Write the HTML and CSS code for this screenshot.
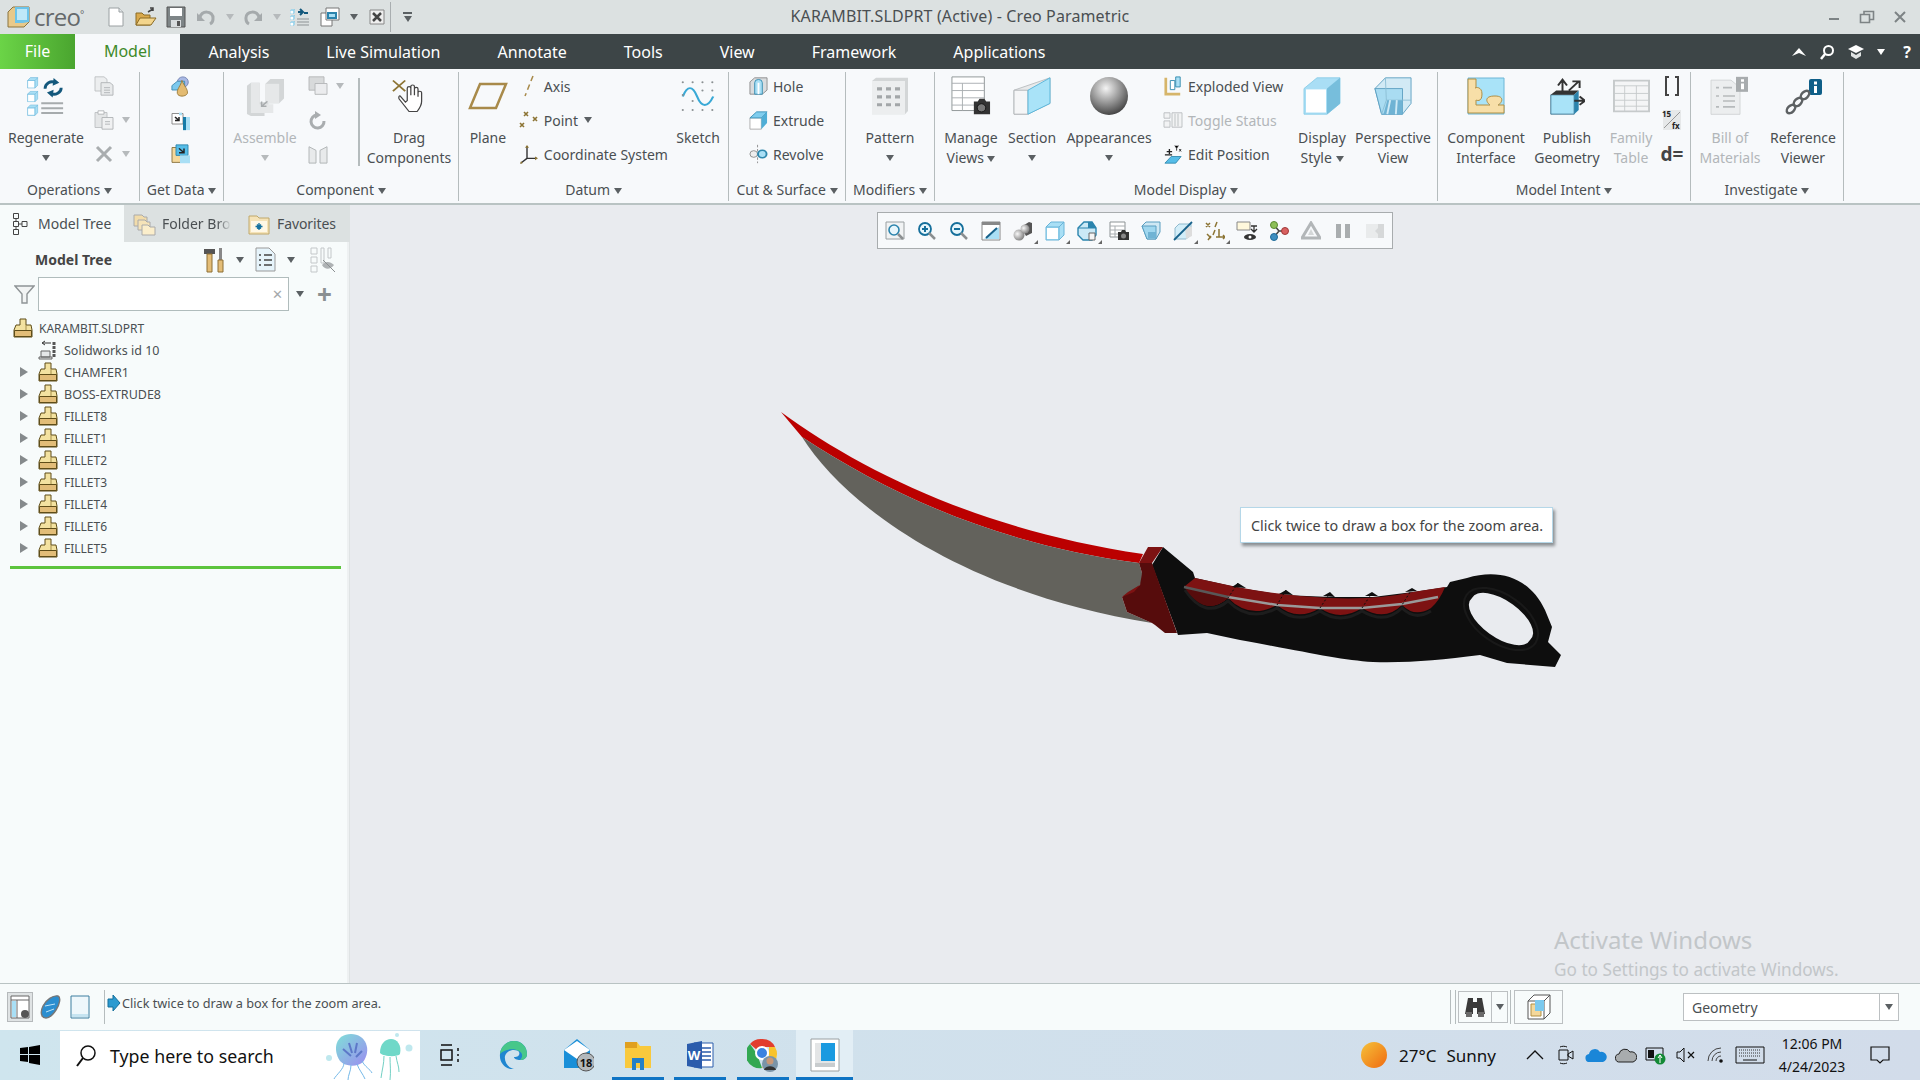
FILE: index.html
```html
<!DOCTYPE html>
<html lang="en">
<head>
    <meta charset="UTF-8">
    <title>KARAMBIT.SLDPRT (Active) - Creo Parametric</title>
    <link rel="stylesheet" href="styles.css">
</head>
<body>
<svg class="defs" width="0" height="0">
    <symbol id="part" viewBox="0 0 20 20"><path d="M7 1h6v6h5l1 5v7H1v-7l2-5h4z" fill="#f3e2a0" stroke="#5e4d18"/><path d="M1.500 12.500h17V18.500h-17z" fill="#e2bd78" stroke="#5e4d18"/><path d="M13 7v5" stroke="#a58f4a"/></symbol>
    <symbol id="cube" viewBox="0 0 20 20"><path d="M1 6l5-5h13v13l-5 5H1z" fill="#a9dff5" stroke="#69b4d8"/><path d="M2 7h11v11H2z" fill="#fff"/><path d="M1 6h13v13M14 6l5-5" fill="none" stroke="#69b4d8"/></symbol>
    <symbol id="arrow" viewBox="0 0 10 12"><path d="M1 1l8 5-8 5z" fill="#858a8c"/></symbol>
</svg>

<!-- title bar -->
<header class="titlebar">
    <div class="qat">
        <svg class="logo" width="24" height="24" viewBox="0 0 24 24"><path d="M1 7l5-5h16v15l-5 5H1z" fill="#e8c98a" stroke="#8a7440"/><path d="M8 2h14v15l-6 1H8z" fill="#6cc4ea"/><path d="M10 4h10v11H10z" fill="#bfe8f8"/></svg>
        <span class="creo">creo<span class="reg">°</span></span>
        <span class="q"><svg width="18" height="20" viewBox="0 0 18 20"><path d="M2 1h10l4 4v14H2z" fill="#fff" stroke="#9aa0a2"/><path d="M12 1v4h4" fill="#e4e8ea" stroke="#9aa0a2"/></svg></span>
        <span class="q"><svg width="22" height="20" viewBox="0 0 22 20"><path d="M1 18V6h6l2 2h6v10z" fill="#d9a94c" stroke="#8a6a24"/><path d="M1 18l4-7h16l-5 7z" fill="#f3d58d" stroke="#8a6a24"/><path d="M13 5l5-3m-3-1h3v3" fill="none" stroke="#444" stroke-width="1.5"/></svg></span>
        <span class="q"><svg width="20" height="22" viewBox="0 0 20 22"><path d="M1 1h18v20H1z" fill="#7e8587" stroke="#555"/><path d="M4 2h12v8H4z" fill="#fff"/><path d="M5 14h10v7H5z" fill="#d8dcde"/><path d="M11 15h3v5h-3z" fill="#555"/></svg></span>
        <span class="q"><svg width="20" height="18" viewBox="0 0 20 18"><path d="M4 10c0-8 14-8 13 1 0 2-1 4-3 5" fill="none" stroke="#a5aaac" stroke-width="3"/><path d="M1 5v8h8z" fill="#a5aaac"/></svg></span>
        <i class="caret qc dim"></i>
        <span class="q"><svg width="20" height="18" viewBox="0 0 20 18"><path d="M16 10c0-8-14-8-13 1 0 2 1 4 3 5" fill="none" stroke="#a5aaac" stroke-width="3"/><path d="M19 5v8h-8z" fill="#a5aaac"/></svg></span>
        <i class="caret qc dim"></i>
        <span class="q"><svg width="20" height="20" viewBox="0 0 20 20"><use href="#cube" width="5" height="5" x="0" y="2"/><use href="#cube" width="5" height="5" x="0" y="8"/><use href="#cube" width="5" height="5" x="0" y="14"/><path d="M7 12h12M7 15h12M7 18h12" stroke="#8d9395"/><path d="M8 5h4m-2-3l3 3-3 3M18 6h-4m2-3" fill="none" stroke="#13587c" stroke-width="2"/></svg></span>
        <span class="q"><svg width="20" height="20" viewBox="0 0 20 20"><path d="M1 6h11v13H1z" fill="#fff" stroke="#777"/><path d="M6 1h13v12H6z" fill="#fff" stroke="#777"/><path d="M7 5h10v7H7z" fill="#2b84ad"/><path d="M9 7h6v3H9z" fill="#a9dff5"/></svg></span>
        <i class="caret qc"></i>
        <span class="q"><svg width="16" height="16" viewBox="0 0 16 16"><path d="M1 1h14v14H1z" fill="#eee" stroke="#888"/><path d="M4 4l8 8m0-8l-8 8" stroke="#444" stroke-width="2.5"/></svg></span>
        <i class="qat-sep"></i>
        <span class="custom"><i class="custom-bar"></i><i class="caret"></i></span>
    </div>
    <div class="title">KARAMBIT.SLDPRT (Active) - Creo Parametric</div>
    <div class="winctl">
        <svg width="14" height="14" viewBox="0 0 14 14"><path d="M2 9h10" stroke="#7d8385" stroke-width="2"/></svg>
        <svg width="16" height="14" viewBox="0 0 16 14"><path d="M1.500 4.500h9v8h-9zM5 4.500V1.500h9.500v8H10.500" fill="none" stroke="#7d8385" stroke-width="1.600"/></svg>
        <svg width="14" height="14" viewBox="0 0 14 14"><path d="M2 2l10 10M12 2L2 12" stroke="#7d8385" stroke-width="2"/></svg>
    </div>
</header>

<!-- menu tabs -->
<nav class="tabbar">
    <a class="tab-file">File</a>
    <a class="tab-model">Model</a>
    <div class="tabs">
        <a>Analysis</a>
        <a>Live Simulation</a>
        <a>Annotate</a>
        <a>Tools</a>
        <a>View</a>
        <a>Framework</a>
        <a>Applications</a>
    </div>
    <div class="tabbar-right">
        <svg width="16" height="10" viewBox="0 0 16 10"><path d="M1 9l7-8 7 8-7-3z" fill="#fff"/></svg>
        <svg width="16" height="16" viewBox="0 0 16 16"><circle cx="9.500" cy="6.500" r="4.500" fill="none" stroke="#fff" stroke-width="2"/><path d="M6 10l-4 5" stroke="#fff" stroke-width="2.500"/></svg>
        <svg width="18" height="16" viewBox="0 0 18 16"><path d="M1 5l8-4 8 4-8 4z" fill="#fff"/><path d="M4 8v4l5 3 5-3V8l-5 3z" fill="#dfe3e3"/></svg>
        <i class="caret white"></i>
        <span class="help">?</span>
    </div>
</nav>

<!-- ribbon -->
<section class="ribbon">
    <div class="group w140">
        <div class="body">
            <div class="big w92">
                <span class="ico"><svg width="38" height="39" viewBox="0 0 40 40" preserveAspectRatio="none"><use href="#cube" width="12" height="12" x="0" y="0"/><use href="#cube" width="12" height="12" x="0" y="14"/><use href="#cube" width="12" height="12" x="0" y="28"/><path d="M15 27h23M15 32h23M15 37h23" stroke="#a6abad" stroke-width="2"/><path d="M19 12c0-5 6-9 11-6m6 5c0 5-6 8-11 6" fill="none" stroke="#13587c" stroke-width="3"/><path d="M28 1l6 5-7 3zM27 21l-6-5 7-3z" fill="#13587c"/></svg></span>
                <span>Regenerate</span><i class="caret"></i>
            </div>
            <div class="col">
                <div class="row"><span class="cell"><svg width="20" height="20" viewBox="0 0 20 24" preserveAspectRatio="none"><path d="M1 1h9l3 3v14H1z" fill="#eceeef" stroke="#bdc1c3"/><path d="M7 8h9l3 3v12H7z" fill="#e8eaeb" stroke="#b0b4b6"/><path d="M10 14h6M10 17h6M10 20h6" stroke="#b0b4b6"/></svg></span></div>
                <div class="row"><span class="cell"><svg width="20" height="20" viewBox="0 0 20 24" preserveAspectRatio="none"><path d="M1 3h12v18H1z" fill="#e4e6e7" stroke="#bdc1c3"/><path d="M4 1h6v4H4z" fill="#fff" stroke="#b0b4b6"/><path d="M8 9h11v14H8z" fill="#f0f1f2" stroke="#b0b4b6"/><path d="M11 14h5M11 17h5" stroke="#b0b4b6"/></svg></span><i class="caret dim"></i></div>
                <div class="row"><span class="cell"><svg width="18" height="18" viewBox="0 0 18 18"><path d="M2 2l14 14M16 2L2 16" stroke="#a9adaf" stroke-width="3"/></svg></span><i class="caret dim"></i></div>
            </div>
        </div>
        <div class="label">Operations <i class="caret"></i></div>
    </div>

    <div class="group w84">
        <div class="body">
            <div class="col pad29">
                <div class="row"><span class="cell"><svg width="20" height="21" viewBox="0 0 22 24" preserveAspectRatio="none"><circle cx="13" cy="7" r="6" fill="#a8b8e4" stroke="#6d7fb0"/><path d="M1 11l6-5h8v10H1z" fill="#7cc9ee" stroke="#3e8ab0"/><path d="M12 5c2 6 7 10 6 15-2 4-10 4-11 0-1-5 4-9 5-15z" fill="#e3bb72" stroke="#9a7a38"/></svg></span></div>
                <div class="row"><span class="cell"><svg width="20" height="21" viewBox="0 0 20 24" preserveAspectRatio="none"><path d="M1 4h11v12H1z" fill="#fff" stroke="#888"/><path d="M8 3h3v3H8z" fill="#a9dff5"/><path d="M12 8h7v15h-7z" fill="#a9dff5"/><path d="M12 8h3v15h-3z" fill="#167ba8"/><path d="M4 8l4 4m0-4v4H4" fill="none" stroke="#222" stroke-width="1.500"/></svg></span></div>
                <div class="row"><span class="cell"><svg width="20" height="21" viewBox="0 0 20 24" preserveAspectRatio="none"><path d="M1 4h11v17H1z" fill="#f4d89b" stroke="#8a7440"/><path d="M5 1h12v12H5z" fill="#55bde8" stroke="#2f88ad"/><path d="M9 13h10v9H9z" fill="#a9dff5"/><path d="M8 5l5 5m0-5v5H8" fill="none" stroke="#222" stroke-width="1.500"/></svg></span></div>
            </div>
        </div>
        <div class="label">Get Data <i class="caret"></i></div>
    </div>

    <div class="group w235">
        <div class="body">
            <div class="big w82 off">
                <span class="ico"><svg width="39" height="39" viewBox="0 0 40 40"><path d="M1 9l4-3h9v20l-3 0h12v5l-4 4v5H5l-4-2z" fill="#d3d6d7"/><path d="M5 6h9v22h14v9H5z" fill="#e6e8e9"/><path d="M20 7l5-5h14v20l-5 5H20z" fill="#d3d6d7"/><path d="M20 7h14v20H20z" fill="#e6e8e9"/><path d="M22 25l-6 5m0-5v5h5" fill="none" stroke="#a8acae" stroke-width="1.500"/></svg></span>
                <span>Assemble</span><i class="caret dim"></i>
            </div>
            <div class="col w52">
                <div class="row"><span class="cell"><svg width="20" height="20" viewBox="0 0 20 24" preserveAspectRatio="none"><path d="M1 1h15v16H1z" fill="#d8dadb" stroke="#b3b6b8"/><path d="M7 9h12v13H7z" fill="#ebecee" stroke="#b3b6b8"/></svg></span><i class="caret dim"></i></div>
                <div class="row"><span class="cell"><svg width="18" height="20" viewBox="0 0 18 20"><path d="M15 11a6.500 6.500 0 1 1-7-6" fill="none" stroke="#a9adaf" stroke-width="3"/><path d="M6 1l6 4-6 4z" fill="#a9adaf"/></svg></span></div>
                <div class="row"><span class="cell"><svg width="20" height="20" viewBox="0 0 20 22" preserveAspectRatio="none"><path d="M1 3l7 4v14H1zM19 3l-7 4v14h7z" fill="#e8eaeb" stroke="#b0b4b6"/></svg></span></div>
            </div>
            <i class="vsep"></i>
            <div class="big w98">
                <span class="ico"><svg width="34" height="36" viewBox="0 0 36 44" preserveAspectRatio="none"><path d="M1 3l13 13M14 3L1 16" stroke="#8c7434" stroke-width="2"/><path d="M9 22l6 8 2-2V12a2 2 0 0 1 4 0v9V10a2 2 0 0 1 4 0v11-8a2 2 0 0 1 4 0v10-5a2 2 0 0 1 4 0v11c0 6-3 10-5 13H19L8 26c-1-2 0-5 1-4z" fill="#fff" stroke="#444" stroke-width="1.400" transform="translate(0 1) scale(.95)"/></svg></span>
                <span>Drag</span><span>Components</span>
            </div>
        </div>
        <div class="label">Component <i class="caret"></i></div>
    </div>

    <div class="group w270">
        <div class="body">
            <div class="big w58">
                <span class="ico"><svg width="40" height="28" viewBox="0 0 40 28"><path d="M12 2h26l-10 24H2z" fill="none" stroke="#a88a4a" stroke-width="2.500"/></svg></span>
                <span>Plane</span>
            </div>
            <div class="col w152">
                <div class="row"><span class="cell"><svg width="14" height="22" viewBox="0 0 14 24" preserveAspectRatio="none"><path d="M11 1l-8 22" stroke="#a88a4a" stroke-width="1.500" stroke-dasharray="6 4"/></svg></span><span class="rtxt">Axis</span></div>
                <div class="row"><span class="cell"><svg width="20" height="20" viewBox="0 0 20 20"><path d="M5 2l4 4m0-4L5 6M14 7l4 4m0-4l-4 4M1 13l4 4m0-4l-4 4" stroke="#8c7434" stroke-width="1.600"/></svg></span><span class="rtxt">Point</span><i class="caret ml8"></i></div>
                <div class="row"><span class="cell"><svg width="20" height="21" viewBox="0 0 20 22" preserveAspectRatio="none"><path d="M8 2v13l-6 5M8 15h10" fill="none" stroke="#333" stroke-width="1.400"/><path d="M8 1l2 3H6zM19 15l-3 2v-4zM1 21l1-3 2 2z" fill="#8c7434"/></svg></span><span class="rtxt">Coordinate System</span></div>
            </div>
            <div class="big w60">
                <span class="ico"><svg width="34" height="33" viewBox="0 0 38 44" preserveAspectRatio="none"><path d="M2 22c5-15 11-15 16 0s12 15 18 0" fill="none" stroke="#39a9d6" stroke-width="2.500"/><g fill="#8a9092"><circle cx="2" cy="3" r="1.200"/><circle cx="13" cy="3" r="1.200"/><circle cx="24" cy="3" r="1.200"/><circle cx="35" cy="3" r="1.200"/><circle cx="2" cy="20" r="1.200"/><circle cx="35" cy="14" r="1.200"/><circle cx="24" cy="14" r="1.200"/><circle cx="2" cy="40" r="1.200"/><circle cx="13" cy="40" r="1.200"/><circle cx="24" cy="40" r="1.200"/><circle cx="35" cy="40" r="1.200"/><circle cx="13" cy="28" r="1.200"/></g></svg></span>
                <span>Sketch</span>
            </div>
        </div>
        <div class="label">Datum <i class="caret"></i></div>
    </div>

    <div class="group w117">
        <div class="body">
            <div class="col pad19">
                <div class="row"><span class="cell"><svg width="19" height="18" viewBox="0 0 20 22" preserveAspectRatio="none"><path d="M1 6l5-5h13v15l-5 5H1z" fill="#d9dcde" stroke="#888"/><path d="M6 21V7a4 4 0 0 1 8 0v14z" fill="#a9dff5" stroke="#2f88ad"/><path d="M9 21V7h2v14z" fill="#fff"/></svg></span><span class="rtxt">Hole</span></div>
                <div class="row"><span class="cell"><svg width="19" height="19" viewBox="0 0 20 22" preserveAspectRatio="none"><path d="M1 8h12v13H1z" fill="#fff" stroke="#aaa"/><path d="M1 8l7-7h11L13 8z" fill="#7fcdee" stroke="#3d92b8"/><path d="M13 8l6-7v13l-6 7z" fill="#4faed6"/></svg></span><span class="rtxt">Extrude</span></div>
                <div class="row"><span class="cell"><svg width="19" height="20" viewBox="0 0 20 24" preserveAspectRatio="none"><path d="M9 1v22" stroke="#888" stroke-dasharray="3 2"/><circle cx="5" cy="12" r="4" fill="#eee" stroke="#888"/><circle cx="14" cy="12" r="4.500" fill="#a9dff5" stroke="#2f88ad" stroke-width="2"/></svg></span><span class="rtxt">Revolve</span></div>
            </div>
        </div>
        <div class="label">Cut &amp; Surface <i class="caret"></i></div>
    </div>

    <div class="group w89">
        <div class="body">
            <div class="big w88">
                <span class="ico"><svg width="38" height="38" viewBox="0 0 38 48" preserveAspectRatio="none"><path d="M1 5l4-4h32v42l-3 4H1z" fill="#d3d6d7"/><path d="M1 5h33v42H1z" fill="#eceeef"/><g fill="#a3a7a9"><path d="M6 13h5v4H6zM15 13h5v4h-5zM24 13h5v4h-5zM6 23h5v4H6zM15 23h5v4h-5zM24 23h5v4h-5zM6 33h5v4H6zM15 33h5v4h-5zM24 33h5v4h-5z"/></g></svg></span>
                <span>Pattern</span><i class="caret"></i>
            </div>
        </div>
        <div class="label">Modifiers <i class="caret"></i></div>
    </div>

    <div class="group w503">
        <div class="body">
            <div class="big w72">
                <span class="ico"><svg width="40" height="40" viewBox="0 0 42 44" preserveAspectRatio="none"><path d="M1 1h34v37H1z" fill="#fff" stroke="#8d9395"/><path d="M1 8h34M1 16h34M1 24h34M1 32h26M12 8v30" stroke="#a8adb0"/><path d="M24 28h4l2-3h5l2 3h4v14H24z" fill="#333"/><circle cx="32" cy="35" r="4.500" fill="#777" stroke="#111"/></svg></span>
                <span>Manage</span><span>Views <i class="caret"></i></span>
            </div>
            <div class="big w50">
                <span class="ico"><svg width="38" height="38" viewBox="0 0 38 46" preserveAspectRatio="none"><path d="M1 16L37 1v31L15 45H1z" fill="#e8eaeb" stroke="#b9bdbf"/><path d="M1 16h14v29H1z" fill="#f5f6f7" stroke="#b0b4b6"/><path d="M15 16L37 1v31L15 45z" fill="#a9e3f8" stroke="#55b3d8"/></svg></span>
                <span>Section</span><i class="caret"></i>
            </div>
            <div class="big w104">
                <span class="ico"><svg width="38" height="38" viewBox="0 0 38 38"><defs><radialGradient id="ball" cx=".42" cy=".3" r=".75"><stop offset="0" stop-color="#f4f4f4"/><stop offset=".55" stop-color="#8f8f8f"/><stop offset="1" stop-color="#3a3a3a"/></radialGradient></defs><circle cx="19" cy="19" r="19" fill="url(#ball)"/></svg></span>
                <span>Appearances</span><i class="caret"></i>
            </div>
            <div class="col w131">
                <div class="row"><span class="cell"><svg width="18" height="20" viewBox="0 0 20 22" preserveAspectRatio="none"><path d="M2 2v18h16" fill="none" stroke="#d6b56a" stroke-width="3"/><path d="M7 5h5v10H7z" fill="#fff" stroke="#2f88ad"/><path d="M13 1h5v11h-5z" fill="#a9dff5" stroke="#2f88ad"/></svg></span><span class="rtxt">Exploded View</span></div>
                <div class="row off"><span class="cell"><svg width="20" height="18" viewBox="0 0 20 20" preserveAspectRatio="none"><path d="M1 2h6v6H1zM1 11h6v7H1zM9 2h10v16H9z" fill="#f2f3f4" stroke="#bcc0c2"/><path d="M12 3v14M15 3v14" stroke="#bcc0c2"/></svg></span><span class="rtxt">Toggle Status</span></div>
                <div class="row"><span class="cell"><svg width="18" height="20" viewBox="0 0 20 24" preserveAspectRatio="none"><path d="M1 23l7-8h11l-6 8z" fill="#55bde8" stroke="#2f88ad"/><path d="M3 9h6m-3-3v6M1 13h8" stroke="#222" stroke-width="1.500"/><path d="M12 2l2 3 2-3m-2 3v3M17 9l2-3m-2 0l2 3" stroke="#222"/></svg></span><span class="rtxt">Edit Position</span></div>
            </div>
            <div class="big w60">
                <span class="ico"><svg width="38" height="38" viewBox="0 0 38 46" preserveAspectRatio="none"><path d="M1 14L14 1h23v31L24 45H1z" fill="#a9def5" stroke="#8ccde8"/><path d="M24 14L37 1v31L24 45z" fill="#77bedc"/><path d="M3 15h20v28H3z" fill="#fff"/></svg></span>
                <span>Display</span><span>Style <i class="caret"></i></span>
            </div>
            <div class="big w82">
                <span class="ico"><svg width="38" height="38" viewBox="0 0 40 46" preserveAspectRatio="none"><path d="M1 14L12 1h27v31l-9 13H8z" fill="#d2eaf5" stroke="#5a9ec0"/><path d="M1 14h29v31H8z" fill="#a9dcf2" stroke="#5a9ec0"/><path d="M12 1l1 27h26M13 28L8 45" fill="none" stroke="#8bbdd4"/><path d="M14 28h16v17H10z" fill="#6fb3d4"/><path d="M17 28l-3 17M24 28l-1 17" stroke="#cfeaf6" stroke-width="2"/></svg></span>
                <span>Perspective</span><span>View</span>
            </div>
        </div>
        <div class="label">Model Display <i class="caret"></i></div>
    </div>

    <div class="group w253">
        <div class="body">
            <div class="big w96">
                <span class="ico"><svg width="38" height="38" viewBox="0 0 38 38"><path d="M1 1h36v36H1z" fill="#a9e3f8" stroke="#6cb6d6"/><path d="M9 2v9c-3 0 6-3 6 6s-6 6-6 6v5h14c-4-3-6-9 5-9s6 8 3 9h6v8H1V2z" fill="#f7dfa8" stroke="#b08f45"/></svg></span>
                <span>Component</span><span>Interface</span>
            </div>
            <div class="big w66">
                <span class="ico"><svg width="36" height="37" viewBox="0 0 40 44" preserveAspectRatio="none"><path d="M2 20h26v23H2z" fill="#a9e3f8" stroke="#2f6a88"/><path d="M2 20l6-5h25l-5 5z" fill="#333"/><path d="M28 20l5-5v23l-5 5z" fill="#2b84ad"/><path d="M15 18V3m-5 6l5-7 5 7M22 15L33 4m-7 0h8v8M28 27h11m-5-5l6 5-6 5" fill="none" stroke="#333" stroke-width="2.200"/></svg></span>
                <span>Publish</span><span>Geometry</span>
            </div>
            <div class="big w62 off">
                <span class="ico"><svg width="37" height="34" viewBox="0 0 38 40" preserveAspectRatio="none"><path d="M1 2h36v36H1z" fill="#f4f5f6" stroke="#c6cacb" stroke-width="2"/><path d="M1 8h36M1 17h36M1 25h36M1 32h36M12 8v30M24 8v30" stroke="#c6cacb"/></svg></span>
                <span>Family</span><span>Table</span>
            </div>
            <div class="col w20">
                <div class="row"><svg width="16" height="20" viewBox="0 0 16 20"><path d="M5 1H2v18h3M11 1h3v18h-3" fill="none" stroke="#444" stroke-width="2"/></svg></div>
                <div class="row"><svg width="20" height="22" viewBox="0 0 20 22"><path d="M1 1h18v20H1z" fill="#e6e8e9"/><path d="M2 19L18 3" stroke="#999"/><text x="0" y="8" class="fx">15</text><text x="10" y="20" class="fx">fx</text></svg></div>
                <div class="row"><span class="deq">d=</span></div>
            </div>
        </div>
        <div class="label">Model Intent <i class="caret"></i></div>
    </div>

    <div class="group w153">
        <div class="body">
            <div class="big w78 off">
                <span class="ico"><svg width="40" height="40" viewBox="0 0 40 48" preserveAspectRatio="none"><path d="M1 5h20l9 9v32H1z" fill="#eceeef" stroke="#d0d3d4"/><path d="M6 14h3M13 14h9M6 24h3M13 24h12M13 30h12M6 37h3M13 37h12" stroke="#b6babc" stroke-width="2"/><path d="M26 1h12v18H26z" fill="#a8acae"/><path d="M31 4h3v3h-3zM31 9h3v7h-3z" fill="#fff"/></svg></span>
                <span>Bill of</span><span>Materials</span>
            </div>
            <div class="big w68">
                <span class="ico"><svg width="37" height="37" viewBox="0 0 37 37"><rect x="24" y="1" width="13" height="16" rx="2" fill="#0f5f88"/><path d="M29 3.500h3v3h-3zM29 8h3v7h-3z" fill="#fff"/><g fill="none" stroke="#5d6163" stroke-width="2.500"><ellipse cx="6" cy="31" rx="5" ry="3.200" transform="rotate(-45 6 31)"/><ellipse cx="13" cy="24" rx="5" ry="3.200" transform="rotate(-45 13 24)"/><ellipse cx="20" cy="17" rx="5" ry="3.200" transform="rotate(-45 20 17)"/></g></svg></span>
                <span>Reference</span><span>Viewer</span>
            </div>
        </div>
        <div class="label">Investigate <i class="caret"></i></div>
    </div>
</section>

<main class="workarea">
    <!-- model tree -->
    <aside class="panel">
        <div class="ptabs">
            <div class="ptab active w124"><svg width="16" height="24" viewBox="0 0 16 24"><path d="M1.500 1.500h5v5h-5zM1.500 9.500h5v5h-5zM1.500 17.500h5v5h-5zM10 9.500h5v5h-5zM6 12h4M4 6v3M4 15v3" fill="none" stroke="#444"/></svg><span>Model Tree</span></div>
            <div class="ptab w114"><svg width="24" height="24" viewBox="0 0 24 24"><path d="M1 3h8l2 2h3v9H1z" fill="#f2dcaa" stroke="#aaa"/><path d="M5 8h7l2 2h3v8H5z" fill="#f5e3b8" stroke="#aaa"/><path d="M9 13h6l2 2h5v8H9z" fill="#fbeecb" stroke="#aaa"/></svg><span class="fade">Folder Bro</span></div>
            <div class="ptab w112"><svg width="22" height="22" viewBox="0 0 22 22"><path d="M1 3h8l2 2h10v16H1z" fill="#f5e3b8" stroke="#c0a86a"/><path d="M3 8h16v11H3z" fill="#fff8e6"/><path d="M11 10v7M7.500 13.500h7M9 11.500l4 4m0-4l-4 4" stroke="#1672a0" stroke-width="1.300"/></svg><span>Favorites</span></div>
        </div>
        <div class="phead">
            <b>Model Tree</b>
            <span class="phead-tools">
                <svg width="22" height="26" viewBox="0 0 22 26"><path d="M1 2h11v5H1z" fill="#555"/><path d="M4 7h5v18H4z" fill="#e4bd77" stroke="#8d6f34"/><path d="M16 1h3v12h-3z" fill="#888"/><path d="M15 13h5v12h-5z" fill="#e4bd77" stroke="#8d6f34"/></svg>
                <i class="caret"></i>
                <svg width="21" height="25" viewBox="0 0 21 25"><path d="M1 1h13l6 6v17H1z" fill="#e6f4fb" stroke="#999"/><path d="M4 8h2M9 8h8M4 13h2M9 13h8M4 18h2M9 18h8" stroke="#444" stroke-width="1.500"/></svg>
                <i class="caret"></i>
                <svg class="ml4" width="26" height="26" viewBox="0 0 26 26"><path d="M1 1h6v6H1zM1 10h6v6H1zM1 19h6v6H1zM11 1h3v15h-3zM18 1h3v10h-3z" fill="none" stroke="#c3c7c9"/><path d="M12 18c3-4 8-4 12 0-4 5-9 5-12 0z" fill="#aeb2b4"/><path d="M13 13l12 12" stroke="#8a8e90"/></svg>
            </span>
        </div>
        <div class="pfilter">
            <svg width="21" height="19" viewBox="0 0 21 19"><path d="M1 1h19l-7 8v9h-5V9z" fill="#f2f4f4" stroke="#8f9496" stroke-width="1.400"/></svg>
            <div class="search-box"><span class="clear">✕</span></div>
            <i class="caret"></i>
            <span class="plus">+</span>
        </div>
        <ul class="tree">
            <li class="root"><svg width="20" height="20"><use href="#part"/></svg><span>KARAMBIT.SLDPRT</span></li>
            <li class="leaf"><svg width="20" height="20" viewBox="0 0 20 20"><path d="M3 11h9v6H3zM1 17h13v2H1z" fill="#e5e7e8" stroke="#666"/><path d="M13 3H5m2-2L4 3l3 2" fill="none" stroke="#333"/><path d="M16 2v16" stroke="#555" stroke-width="3" stroke-dasharray="3 1"/></svg><span>Solidworks id 10</span></li>
            <li><svg class="tw" width="10" height="12"><use href="#arrow"/></svg><svg width="20" height="20"><use href="#part"/></svg><span>CHAMFER1</span></li>
            <li><svg class="tw" width="10" height="12"><use href="#arrow"/></svg><svg width="20" height="20"><use href="#part"/></svg><span>BOSS-EXTRUDE8</span></li>
            <li><svg class="tw" width="10" height="12"><use href="#arrow"/></svg><svg width="20" height="20"><use href="#part"/></svg><span class="narrow">FILLET8</span></li>
            <li><svg class="tw" width="10" height="12"><use href="#arrow"/></svg><svg width="20" height="20"><use href="#part"/></svg><span class="narrow">FILLET1</span></li>
            <li><svg class="tw" width="10" height="12"><use href="#arrow"/></svg><svg width="20" height="20"><use href="#part"/></svg><span class="narrow">FILLET2</span></li>
            <li><svg class="tw" width="10" height="12"><use href="#arrow"/></svg><svg width="20" height="20"><use href="#part"/></svg><span class="narrow">FILLET3</span></li>
            <li><svg class="tw" width="10" height="12"><use href="#arrow"/></svg><svg width="20" height="20"><use href="#part"/></svg><span class="narrow">FILLET4</span></li>
            <li><svg class="tw" width="10" height="12"><use href="#arrow"/></svg><svg width="20" height="20"><use href="#part"/></svg><span class="narrow">FILLET6</span></li>
            <li><svg class="tw" width="10" height="12"><use href="#arrow"/></svg><svg width="20" height="20"><use href="#part"/></svg><span class="narrow">FILLET5</span></li>
        </ul>
        <div class="insert-line"></div>
    </aside>
    <div class="sash"></div>

    <!-- graphics window -->
    <div class="viewport">
        <svg class="knife" width="1570" height="778" viewBox="350 205 1570 778">
            <path fill="#0e0e0e" fill-rule="evenodd" d="M1163 547L1193 572 1195 578 1240 588 1283 595 1330 597 1373 597 1413 592 1447 587 1450 582 1467 578C1500 568 1530 578 1545 610L1552 627 1548 642 1561 655 1555 667 1507 663 1480 655C1440 660 1410 663 1373 662 1340 660 1307 652 1240 640L1207 633 1178 635 1152 565ZM1472 598A36 17 35 1 0 1530 640A36 17 35 1 0 1472 598Z"/>
            <ellipse cx="1501" cy="619" rx="42" ry="24" transform="rotate(35 1501 619)" fill="none" stroke="#191919" stroke-width="2"/>
            <path fill="none" stroke="#1d1d1d" stroke-width="3" d="M1185 590Q1205 620 1228 601Q1250 623 1277 608Q1297 625 1320 611Q1340 625 1362 611Q1385 625 1402 608Q1415 621 1431 611"/>
            <path fill="#7d1212" d="M1185 586L1195 578 1237 587Q1283 596 1330 598T1413 592L1445 587Q1440 600 1431 608 1415 618 1402 605 1385 622 1362 608 1340 622 1320 608 1297 622 1277 605 1250 620 1228 598 1205 618 1185 586Z"/>
            <path fill="#560c0c" d="M1185 588L1228 598Q1205 618 1185 588Z"/>
            <polyline fill="none" stroke="#585858" stroke-width="2.500" points="1184,587 1228,597"/>
            <polyline fill="none" stroke="#9a9a9a" stroke-width="2.500" points="1228,597 1277,605 1320,608 1362,608 1402,604 1438,597"/>
            <g fill="#0e0e0e"><path d="M1232 587l6-4 8 5zM1279 594l7-4 7 5zM1323 596l7-4 5 5zM1365 596l7-4 6 4zM1405 592l7-4 5 3z"/></g>
            <path d="M1238 583l-10 15M1286 590l-9 15M1330 593l-10 15M1372 593l-10 15M1412 589l-10 16" stroke="#0e0e0e" stroke-dasharray="2 2"/>
            <path fill="#bb0000" d="M781 412C860 470 980 530 1143 554L1139 563C1000 545 890 495 802 437Z"/>
            <path fill="#63625c" d="M802 437C890 495 1000 545 1139 563L1142 573Q1142 583 1140 585 1132 594 1122 597L1127 612 1152 623C960 592 845 505 802 437Z"/>
            <polygon fill="#560c0c" points="1139,563 1152,563 1177,633 1165,633 1155,625 1152,623 1127,612 1122,597 1140,585 1142,573"/>
            <polygon fill="#7d1212" points="1148,547 1163,547 1152,563 1139,563"/>
            <polygon fill="#7d1212" points="1122,597 1128,592 1140,585 1134,592"/>
        </svg>

        <div class="gfx-toolbar">
            <span><svg width="20" height="20" viewBox="0 0 20 20"><path d="M1 1h18v17H1z" fill="#f1f3f4" stroke="#9aa0a2"/><circle cx="9" cy="9" r="5" fill="#e7f6fc" stroke="#2b84ad" stroke-width="1.600"/><path d="M13 13l5 5" stroke="#8b8f91" stroke-width="2.500"/></svg></span>
            <span><svg width="20" height="20" viewBox="0 0 20 20"><circle cx="8" cy="8" r="6" fill="#e7f6fc" stroke="#156f9b" stroke-width="1.800"/><path d="M5 8h6M8 5v6" stroke="#156f9b" stroke-width="2"/><path d="M12 12l6 6" stroke="#8b8f91" stroke-width="2.500"/></svg></span>
            <span><svg width="20" height="20" viewBox="0 0 20 20"><circle cx="8" cy="8" r="6" fill="#e7f6fc" stroke="#156f9b" stroke-width="1.800"/><path d="M5 8h6" stroke="#156f9b" stroke-width="2"/><path d="M12 12l6 6" stroke="#8b8f91" stroke-width="2.500"/></svg></span>
            <span><svg width="20" height="20" viewBox="0 0 20 20"><path d="M1 1h18v18H1z" fill="#fff" stroke="#888"/><path d="M1 1h18v3H1z" fill="#888"/><path d="M2 18c5-1 9-6 16-12v12z" fill="#a9dff5"/><path d="M5 17L16 7" stroke="#17618a" stroke-width="2"/></svg></span>
            <span class="tick"><svg width="20" height="20" viewBox="0 0 20 20"><defs><radialGradient id="sph" cx=".35" cy=".4" r=".7"><stop offset="0" stop-color="#f8f8f8"/><stop offset="1" stop-color="#777"/></radialGradient></defs><path d="M8 6l8-5 3 1v10l-6 3z" fill="#555"/><circle cx="6" cy="14" r="5.500" fill="url(#sph)"/><circle cx="12" cy="8" r="4.500" fill="url(#sph)"/></svg></span>
            <span class="tick"><svg width="20" height="20"><use href="#cube"/></svg></span>
            <span class="tick"><svg width="20" height="20" viewBox="0 0 20 20"><path d="M1 7l6-6h8l4 6v7l-4 5H6l-5-5z" fill="#cbe9f6" stroke="#2b84ad" stroke-width="1.400"/><path d="M1 7h18M15 7l-4-6" fill="none" stroke="#2b84ad"/><path d="M11 1l4 0 4 6h-8z" fill="#2b84ad"/><path d="M12 12h6v7h-6z" fill="#f5f5f5" stroke="#666"/></svg></span>
            <span><svg width="21" height="20" viewBox="0 0 21 20"><path d="M1 1h15v15H1z" fill="#fff" stroke="#8d9395"/><path d="M1 5h15M1 9h15M1 13h9M6 5v11" stroke="#a8adb0"/><path d="M9 11h3l1-2h3l1 2h3v8H9z" fill="#333"/><circle cx="14.500" cy="15" r="2.500" fill="#888"/></svg></span>
            <span><svg width="20" height="19" viewBox="0 0 20 19"><path d="M1 5l4-4h14v10l-4 7H6z" fill="#cfe8f4" stroke="#5a9ec0"/><path d="M1 5h14v13H6z" fill="#9fd7ef" stroke="#5a9ec0"/><path d="M7 11h8v6H7z" fill="#6fb3d4"/></svg></span>
            <span class="tick"><svg width="20" height="20" viewBox="0 0 20 20"><path d="M2 7l4-4h12v11l-5 4H2z" fill="#d3eef9" stroke="#8fb9cd"/><path d="M12 5l7 1v9l-6 3z" fill="#ddd"/><path d="M1 19L19 1" stroke="#17618a" stroke-width="1.800"/></svg></span>
            <span class="tick"><svg width="20" height="20" viewBox="0 0 20 20"><path d="M1 2l4 4m0-4L1 6M12 1l-2 5M10 9l-2 5M14 8v8m-3 0h8m-1-2l2 2-2 2M6 15l-3 4M2 13l4 4" fill="none" stroke="#8c7434" stroke-width="1.500"/></svg></span>
            <span><svg width="22" height="20" viewBox="0 0 22 20"><path d="M1 1h13v8H1z" fill="#fff8dc" stroke="#888"/><path d="M15 5h6M18 5v7M15 8l3 3 3-3" fill="none" stroke="#333" stroke-width="1.300"/><ellipse cx="14" cy="16" rx="6" ry="3" fill="#333"/><circle cx="14" cy="16" r="1.500" fill="#fff"/></svg></span>
            <span><svg width="20" height="20" viewBox="0 0 20 20"><path d="M10 10L5 4M10 10l7 0M10 10l-5 6" stroke="#444" stroke-width="1.500"/><circle cx="5" cy="4" r="3.500" fill="#8dbf58" stroke="#5a8a30"/><circle cx="16" cy="10" r="3.500" fill="#d86060" stroke="#a03838"/><circle cx="5" cy="16" r="3.500" fill="#3d8ec0" stroke="#1f6a98"/></svg></span>
            <span><svg width="20" height="20" viewBox="0 0 20 20"><path d="M10 2L1 17h18z" fill="none" stroke="#b2b6b8" stroke-width="3"/><path d="M10 8l-3 6h6z" fill="#d4d7d8"/></svg></span>
            <span><svg width="16" height="16" viewBox="0 0 16 16"><path d="M1 1h5v14H1zM10 1h5v14h-5z" fill="#a9adaf"/></svg></span>
            <span><svg width="20" height="16" viewBox="0 0 20 16"><path d="M1 1h18v14H1z" fill="#d6d8d9"/><path d="M1 1h12v4l-3 3 3 3v4H1z" fill="#e9ebec"/></svg></span>
        </div>

        <div class="tooltip">Click twice to draw a box for the zoom area.</div>

        <div class="watermark">
            <div class="wm1">Activate Windows</div>
            <div class="wm2">Go to Settings to activate Windows.</div>
        </div>
    </div>
</main>

<!-- status bar -->
<footer class="statusbar">
    <span class="st-btn on"><svg width="20" height="24" viewBox="0 0 20 24"><path d="M1 1h18v22H1z" fill="#fff" stroke="#666"/><path d="M1 5h18M7 5v18" stroke="#666"/><path d="M2 6h4v16H2z" fill="#a9dff5"/><circle cx="15" cy="19" r="4" fill="#555"/></svg></span>
    <span class="st-btn"><svg width="22" height="26" viewBox="0 0 22 26"><path d="M7 24c-5 0-6-6-3-12S14 1 19 2c3 1 2 8-2 14s-7 8-10 8z" fill="#2b8ed0" stroke="#777" stroke-width="1.400"/><path d="M6 12l10-2M7 18l8-3" stroke="#bfe3f6"/></svg></span>
    <span class="st-btn"><svg width="20" height="24" viewBox="0 0 20 24"><path d="M1 1h18v22H1z" fill="#eef7fb" stroke="#3d7fa0"/><path d="M2 19h16v3H2z" fill="#c6e4f1"/></svg></span>
    <i class="st-sep"></i>
    <svg class="st-arrow" width="14" height="18" viewBox="0 0 14 18"><path d="M1 5h5V1l7 8-7 8v-4H1z" fill="#2b9ad0" stroke="#156f9b"/></svg>
    <span class="st-msg">Click twice to draw a box for the zoom area.</span>
    <div class="st-right">
        <i class="st-grip"></i>
        <span class="find"><span class="find-ico"><svg width="22" height="22" viewBox="0 0 22 22"><path d="M4 2h5v4h4V2h5l3 16H13v-6H9v6H1z" fill="#3a3a3a"/><path d="M2 16h6v5H2zM14 16h6v5h-6z" fill="#6a6a6a"/></svg></span><span class="find-arrow"><i class="caret"></i></span></span>
        <i class="st-grip2"></i>
        <span class="cubebox"><svg width="24" height="26" viewBox="0 0 24 26"><path d="M1 7l6-6h16v18l-6 6H1z" fill="#fff" stroke="#555"/><path d="M1 7h16v18M17 7l6-6" fill="none" stroke="#555"/><path d="M4 10h10v12H4z" fill="#f4d89b" stroke="#b08f45"/><path d="M8 6h9v11H8z" fill="#7cc9ee"/></svg></span>
        <div class="geom"><span>Geometry</span><span class="geom-arrow"><i class="caret"></i></span></div>
    </div>
</footer>

<!-- windows taskbar -->
<footer class="taskbar">
    <span class="start"><svg width="20" height="20" viewBox="0 0 20 20"><path d="M0 3l8-1v7H0zM9 2l11-2v9H9zM0 10h8v7l-8-1zM9 10h11v10L9 18z" fill="#000"/></svg></span>
    <div class="tsearch">
        <svg width="22" height="24" viewBox="0 0 22 24"><circle cx="13" cy="9" r="7" fill="none" stroke="#111" stroke-width="1.500"/><path d="M8 14l-6 8" stroke="#111" stroke-width="2"/></svg>
        <span>Type here to search</span>
        <svg class="jelly" width="92" height="50" viewBox="0 0 92 50"><defs><linearGradient id="jg" x1="0" y1="0" x2="1" y2="1"><stop offset="0" stop-color="#7fe0d8"/><stop offset="1" stop-color="#9b8cf0"/></linearGradient></defs><path d="M16 30C8 18 12 3 27 3s21 16 12 28c-5 5-18 5-23-1z" fill="url(#jg)"/><path d="M25 12l3 10M33 12l-2 10M38 20l-6 6M19 18l8 7" stroke="#5d78c8" stroke-width="2"/><path d="M20 32c0 6-8 12-10 16M27 34c0 6-3 10-3 15M33 33c2 6 6 10 8 15M38 30c3 6 8 8 10 12" fill="none" stroke="#74b8e8"/><path d="M56 22c0-9 5-14 11-14s11 6 9 15c-2 3-16 3-20-1z" fill="#6fd8c8"/><path d="M60 25c0 8-2 14-3 22M66 26c0 8 1 14 0 23M72 25c1 7 3 10 3 16" fill="none" stroke="#72d0c4"/><circle cx="5" cy="27" r="3" fill="#bfe8ee"/><circle cx="85" cy="17" r="3.500" fill="#bfe8ee"/><circle cx="73" cy="4" r="2" fill="#bfe8ee"/></svg>
    </div>
    <div class="tapps">
        <span class="tapp"><svg width="20" height="22" viewBox="0 0 20 22"><path d="M1 1h11M1 21h11M1 6h11v10H1zM18 4v3M18 10v2M18 15v3" fill="none" stroke="#111" stroke-width="1.500"/></svg></span>
        <span class="tapp"><svg width="30" height="30" viewBox="0 0 30 30"><path d="M2 14C3 6 9 1 16 1c8 0 13 6 13 13 0 4-3 6-7 6-3 0-6-1-6-3 5 0 6-3 5-5-2-3-12-3-14 4-1 6 3 12 9 13C8 30 1 23 2 14z" fill="#1f86d0"/><path d="M2 14C3 6 9 1 16 1c8 0 13 6 13 13 0 4-3 6-7 6 3-3 3-7-1-9-5-3-15-2-19 3z" fill="#47c78a"/></svg></span>
        <span class="tapp"><svg class="mail" width="32" height="34" viewBox="0 0 32 34"><path d="M2 12L15 1l13 11v18H2z" fill="#1a8fd8"/><path d="M2 12l13 9 13-9-13-9z" fill="#fff"/><circle cx="24" cy="24" r="9" fill="#b3b8bb" stroke="#555"/><text x="24" y="29" class="badge">18</text></svg></span>
        <span class="tapp u"><svg width="28" height="30" viewBox="0 0 28 30"><path d="M1 2h12l3 4h11v22H1z" fill="#f9c93c"/><path d="M1 2h12v6H1z" fill="#e0a020"/><path d="M8 30V18h12v12h-4v-7h-4v7z" fill="#2380c8"/></svg></span>
        <span class="tapp u"><svg width="28" height="30" viewBox="0 0 28 30"><path d="M8 3h19v24H8z" fill="#fff" stroke="#2b5cac"/><path d="M16 8h9M16 12h9M16 16h9M16 20h9" stroke="#2b5cac" stroke-width="1.500"/><path d="M1 4l15-3v28L1 26z" fill="#2b5cac"/><text x="8" y="20" class="wd">W</text></svg></span>
        <span class="tapp u"><svg width="32" height="34" viewBox="0 0 32 34"><path d="M15 1a14 14 0 0 1 13 8H15z" fill="#e23d2e"/><path d="M3 6a14 14 0 0 1 12-5v8a6 6 0 0 0-5 3z" fill="#e23d2e"/><path d="M3 6l7 10 5 14A14 14 0 0 1 3 6z" fill="#32a852"/><path d="M28 9a14 14 0 0 1-13 21l7-12V9z" fill="#f8c32c"/><circle cx="15" cy="15" r="6" fill="#3b82e0" stroke="#fff" stroke-width="2"/><circle cx="23" cy="26" r="8" fill="#7a94a8"/><circle cx="23" cy="23" r="3.500" fill="#c89878"/><path d="M17 32c1-5 11-5 12 0z" fill="#333"/></svg></span>
        <span class="tapp active u"><svg width="30" height="34" viewBox="0 0 30 34"><path d="M1 1h28v32H1z" fill="#fff" stroke="#9aa0a2"/><path d="M5 5h20v20H5z" fill="#e3e5e6"/><path d="M11 5h14v18H11z" fill="#1a9ae0"/><path d="M5 25h20v4H5z" fill="#c8ccce"/></svg></span>
    </div>
    <div class="tray">
        <svg class="sun" width="26" height="26"><defs><linearGradient id="sun" x1="0" y1="0" x2="1" y2="1"><stop offset="0" stop-color="#f5c23a"/><stop offset="1" stop-color="#f06a10"/></linearGradient></defs><circle cx="13" cy="13" r="13" fill="url(#sun)"/></svg>
        <span class="temp">27°C</span>
        <span class="sky">Sunny</span>
        <svg class="t-chev" width="18" height="10" viewBox="0 0 18 10"><path d="M1 9l8-8 8 8" fill="none" stroke="#111" stroke-width="1.300"/></svg>
        <span class="tcell"><svg width="16" height="20" viewBox="0 0 16 20"><path d="M1 5h9v10H1zM10 9l5-3v8l-5-3zM2 2c2-1 5-1 7 0M2 18c2 1 5 1 7 0" fill="none" stroke="#111"/></svg></span>
        <span class="tcell"><svg width="22" height="14" viewBox="0 0 22 14"><path d="M5 14a4 4 0 0 1-1-8 6 6 0 0 1 11-2 5 5 0 0 1 3 10z" fill="#1a86d8"/></svg></span>
        <span class="tcell"><svg width="22" height="16" viewBox="0 0 22 16"><path d="M5 15a4 4 0 0 1-1-8 6 6 0 0 1 11-2 5 5 0 0 1 3 10z" fill="#a8acae" stroke="#222"/></svg></span>
        <span class="tcell"><svg width="22" height="20" viewBox="0 0 22 20"><path d="M1 3h17v12H1z" fill="none" stroke="#111"/><path d="M3 5h6v8H3z" fill="#111"/><circle cx="15" cy="14" r="5.500" fill="#138a36"/><path d="M15 10v8m-2-5l2-3 2 3" fill="none" stroke="#fff"/></svg></span>
        <span class="tcell"><svg width="20" height="16" viewBox="0 0 20 16"><path d="M1 5h3l4-4v14l-4-4H1z" fill="none" stroke="#111"/><path d="M12 5l6 6m0-6l-6 6" stroke="#111" stroke-width="1.200"/></svg></span>
        <span class="tcell"><svg width="18" height="16" viewBox="0 0 18 16"><path d="M1 14a13 13 0 0 1 13-13M5 14a9 9 0 0 1 9-9M9 14a5 5 0 0 1 5-5" fill="none" stroke="#444"/><circle cx="14" cy="14" r="1.800" fill="#111"/></svg></span>
        <span class="tcell wide"><svg width="30" height="18" viewBox="0 0 30 18"><path d="M1 1h28v16H1z" fill="none" stroke="#111"/><path d="M4 4h22M4 7h22M4 10h22" stroke="#333" stroke-dasharray="1 1"/><path d="M8 14h14" stroke="#111"/></svg></span>
        <div class="clock"><span>12:06 PM</span><span>4/24/2023</span></div>
        <svg class="t-note" width="20" height="18" viewBox="0 0 20 18"><path d="M1 1h18v13h-6l-3 3-3-3H1z" fill="none" stroke="#111" stroke-width="1.200"/></svg>
    </div>
</footer>
</body>
</html>
```

FILE: styles.css
```css
*{
    margin: 0;
    padding: 0;
    box-sizing: border-box;
    list-style-type: none;
}
html,body{
    width: 1920px;
    height: 1080px;
    overflow: hidden;
}
body{
    display: flex;
    flex-direction: column;
    font-family: "Noto Sans", "Open Sans", sans-serif;
    color: #4a4f52;
    background: #e9ebef;
}
.defs{
    position: absolute;
}
svg{
    display: block;
    flex: none;
}
.caret{
    display: inline-block;
    width: 0;
    height: 0;
    border-left: 4.5px solid transparent;
    border-right: 4.5px solid transparent;
    border-top: 6px solid #5b6063;
    vertical-align: middle;
    flex: none;
}
.caret.dim{
    border-top-color: #b6babc;
}
.caret.white{
    border-top-color: #fff;
}

/* title bar */
.titlebar{
    height: 34px;
    background: #dce1e1;
    display: grid;
    grid-template-columns: 1fr auto 1fr;
    align-items: center;
}
.qat{
    display: flex;
    align-items: center;
    padding-left: 7px;
}
.creo{
    font-family: "Open Sans", sans-serif;
    font-size: 24px;
    letter-spacing: -.8px;
    color: #65696b;
    width: 67px;
    margin-left: 3px;
    line-height: 28px;
    margin-bottom: 3px;
    white-space: nowrap;
}
.reg{
    font-size: 10px;
    vertical-align: 8px;
}
.q{
    width: 30px;
    display: flex;
    justify-content: center;
}
.qc{
    margin: 0 4.500px;
}
.qat-sep{
    width: 1px;
    height: 30px;
    background: #a9aeb0;
    margin: 0 8px 0 -2px;
}
.custom{
    display: flex;
    flex-direction: column;
    align-items: center;
    gap: 2px;
    margin-left: 4px;
}
.custom-bar{
    width: 9px;
    height: 2px;
    background: #5b6063;
}
.title{
    font-size: 16px;
    letter-spacing: .12px;
    color: #4a4f52;
    margin-top: -2px;
}
.winctl{
    display: flex;
    justify-content: flex-end;
    gap: 18px;
    padding-right: 13px;
}

/* tabs */
.tabbar{
    height: 35px;
    background: #3d4547;
    display: flex;
    align-items: center;
    font-size: 16px;
    color: #fff;
}
.tab-file{
    width: 75px;
    height: 35px;
    line-height: 35px;
    text-align: center;
    background: linear-gradient(90deg, #6bd447, #4aa52f);
}
.tab-model{
    width: 105px;
    height: 35px;
    line-height: 35px;
    text-align: center;
    background: #f7f9fb;
    color: #3f8a2a;
}
.tabs{
    display: flex;
}
.tabs a{
    padding: 0 28.500px;
}
.tabbar-right{
    margin-left: auto;
    display: flex;
    align-items: center;
    gap: 12px;
    padding-right: 9px;
}
.help{
    font-weight: 700;
    font-size: 16px;
    margin-left: 6px;
}

/* ribbon */
.ribbon{
    height: 136px;
    background: #f7f9fb;
    border-bottom: 2px solid #b9c3c3;
    display: flex;
    font-size: 14px;
    padding-top: 1px;
}
.group{
    display: flex;
    flex-direction: column;
    border-right: 1px solid #b5bcbd;
    margin-top: 2px;
    margin-bottom: 2px;
}
.body{
    flex: 1;
    display: flex;
    margin-top: -2px;
}
.label{
    height: 24px;
    line-height: 25px;
    text-align: center;
    white-space: nowrap;
}
.big{
    display: flex;
    flex-direction: column;
    align-items: center;
    line-height: 20px;
    white-space: nowrap;
}
.big .caret{
    margin-top: 7px;
}
.big span .caret{
    margin-top: 0;
}
.ico{
    height: 52px;
    margin-bottom: 6px;
    display: flex;
    align-items: center;
    justify-content: center;
}
.off{
    color: #b2b6b9;
}
.col{
    display: flex;
    flex-direction: column;
    margin-top: -1px;
}
.row{
    height: 34px;
    display: flex;
    align-items: center;
    white-space: nowrap;
}
.cell{
    width: 24px;
    display: flex;
    justify-content: center;
    flex: none;
}
.rtxt{
    margin-left: 3px;
}
.ml8{
    margin-left: 8px;
}
.col .row > .caret{
    margin-left: 6px;
}
.pad29{
    padding-left: 29px;
}
.pad19{
    padding-left: 17px;
}
.vsep{
    width: 2px;
    height: 88px;
    margin-top: 8px;
    background: #b5bcbd;
}
.w20{width:20px;align-items:center}
.w50{width:50px}
.w52{width:52px}
.w58{width:58px}
.w60{width:60px}
.w62{width:62px}
.w66{width:66px}
.w68{width:68px}
.w72{width:72px}
.w78{width:78px}
.w82{width:82px}
.w84{width:84px}
.w88{width:88px}
.w89{width:89px}
.w92{width:92px}
.w96{width:96px}
.w98{width:98px}
.w104{width:104px}
.w112{width:112px}
.w114{width:114px}
.w117{width:117px}
.w124{width:124px}
.w131{width:131px}
.w140{width:140px}
.w152{width:152px}
.w153{width:153px}
.w235{width:235px}
.w253{width:253px}
.w270{width:270px}
.w503{width:503px}
.deq{
    font-size: 19px;
    font-weight: 700;
    color: #444;
    line-height: 19px;
}
.fx{
    font-size: 8px;
    font-weight: 700;
    fill: #222;
    font-family: "Noto Sans", sans-serif;
}

/* work area */
.workarea{
    flex: 1;
    display: flex;
    min-height: 0;
}
.panel{
    width: 347px;
    background: #f7fbfb;
    display: flex;
    flex-direction: column;
    font-size: 12.500px;
}
.sash{
    width: 3px;
    background: #eef1f2;
    border-right: 1px solid #dfe3e4;
}
.ptabs{
    height: 37px;
    width: 350px;
    background: #dce1e1;
    display: flex;
    font-size: 14px;
    position: relative;
    z-index: 1;
}
.ptab{
    display: flex;
    align-items: center;
    gap: 5px;
    padding-left: 9px;
    white-space: nowrap;
    overflow: hidden;
}
.ptab.active{
    background: #f7fbfb;
    padding-left: 12px;
    gap: 10px;
}
.ptab.w112{padding-left: 10px;gap: 7px;letter-spacing: -.1px}
.fade{
    width: 69px;
    overflow: hidden;
    -webkit-mask-image: linear-gradient(90deg, #000 80%, transparent);
    mask-image: linear-gradient(90deg, #000 80%, transparent);
}
.phead{
    height: 35px;
    display: flex;
    align-items: center;
    padding-left: 35px;
    font-size: 14px;
    color: #444;
}
.phead-tools{
    margin-left: auto;
    display: flex;
    align-items: center;
    gap: 11px;
    padding-right: 11px;
}
.ml4{
    margin-left: 4px;
}
.pfilter{
    height: 34px;
    display: flex;
    align-items: center;
    padding-left: 14px;
}
.search-box{
    width: 251px;
    height: 34px;
    margin-left: 3px;
    background: #fff;
    border: 1px solid #b0bcbc;
    display: flex;
    align-items: center;
    justify-content: flex-end;
    padding-right: 5px;
    margin-right: 7px;
}
.clear{
    color: #a5a9ab;
    font-size: 13px;
}
.plus{
    margin-left: 13px;
    font-size: 26px;
    line-height: 24px;
    font-weight: 700;
    color: #8b9092;
}
.tree{
    padding-top: 6px;
}
.tree li{
    height: 22px;
    display: flex;
    align-items: center;
    padding-left: 38px;
    gap: 6px;
    position: relative;
}
.tree .tw{
    position: absolute;
    left: 19px;
    top: 5px;
}
.tree .root{
    padding-left: 13px;
    gap: 6px;
    font-size: 12px;
}
.narrow{
    font-size: 12px;
}
.insert-line{
    height: 3px;
    margin: 7px 6px 0 10px;
    background: #5cc43d;
}
.viewport{
    flex: 1;
    position: relative;
    background: #e9ebef;
    overflow: hidden;
}
.knife{
    position: absolute;
    left: 0;
    top: 0;
}
.gfx-toolbar{
    position: absolute;
    left: 527px;
    top: 7px;
    width: 516px;
    height: 37px;
    display: flex;
    align-items: center;
    padding: 0 1px;
    background: #f7f9fb;
    border: 1px solid #a8acae;
}
.gfx-toolbar span{
    width: 32px;
    display: flex;
    justify-content: center;
    position: relative;
}
.gfx-toolbar .tick::after{
    content: "";
    position: absolute;
    right: 1px;
    bottom: -3px;
    border-left: 4px solid transparent;
    border-bottom: 4px solid #666;
}
.tooltip{
    position: absolute;
    left: 890px;
    top: 302px;
    width: 313px;
    height: 36px;
    line-height: 36px;
    padding-left: 10px;
    font-size: 14.300px;
    color: #444;
    background: #fff;
    border: 1px solid #b5d7e8;
    box-shadow: 2px 3px 3px #8a8f92;
    white-space: nowrap;
}
.watermark{
    position: absolute;
    left: 1204px;
    top: 719px;
    color: #c2c6c9;
    white-space: nowrap;
}
.wm1{
    font-size: 24px;
    line-height: 32px;
}
.wm2{
    font-size: 17.200px;
    line-height: 27px;
}

/* status bar */
.statusbar{
    height: 47px;
    background: #f7fbfb;
    border-top: 1px solid #b9c3c3;
    display: flex;
    align-items: center;
    font-size: 12.700px;
    padding-left: 7px;
}
.st-btn{
    width: 26px;
    height: 30px;
    margin-right: 4px;
    display: flex;
    align-items: center;
    justify-content: center;
}
.st-btn.on{
    background: #dfe3e4;
    border: 1px solid #b5b9bb;
}
.st-sep{
    width: 1px;
    height: 34px;
    background: #b5bcbd;
    margin-left: 7px;
    margin-right: 2px;
}
.st-arrow{
    margin-bottom: 8px;
}
.st-msg{
    margin-left: 1px;
    margin-bottom: 8px;
}
.st-right{
    margin-left: auto;
    display: flex;
    align-items: center;
    padding-right: 21px;
}
.st-grip{
    width: 6px;
    height: 34px;
    border-left: 1px solid #b5bcbd;
    border-right: 1px solid #b5bcbd;
    margin-right: 2px;
}
.find{
    width: 50px;
    height: 32px;
    border: 1px solid #bcc0c2;
    display: flex;
}
.find-ico{
    width: 33px;
    display: flex;
    align-items: center;
    justify-content: center;
    border-right: 1px solid #bcc0c2;
}
.find-arrow{
    flex: 1;
    display: flex;
    align-items: center;
    justify-content: center;
}
.st-grip2{
    width: 1px;
    height: 34px;
    background: #b5bcbd;
    margin: 0 3px 0 2px;
}
.cubebox{
    width: 49px;
    height: 34px;
    border: 1px solid #bcc0c2;
    display: flex;
    align-items: center;
    justify-content: center;
}
.geom{
    width: 216px;
    height: 28px;
    margin-left: 120px;
    border: 1px solid #bcc0c2;
    background: #fff;
    display: flex;
    align-items: center;
    font-size: 14px;
    padding-left: 8px;
}
.geom-arrow{
    margin-left: auto;
    width: 19px;
    height: 26px;
    border-left: 1px solid #bcc0c2;
    display: flex;
    align-items: center;
    justify-content: center;
}

/* taskbar */
.taskbar{
    height: 50px;
    background: linear-gradient(90deg, #cfe5ee, #d2dcea);
    display: flex;
    align-items: center;
    color: #111;
}
.start{
    width: 60px;
    display: flex;
    justify-content: center;
}
.tsearch{
    width: 360px;
    height: 49px;
    margin-top: 1px;
    background: #fff;
    display: flex;
    align-items: center;
    padding-left: 15px;
    font-size: 17.800px;
}
.tsearch span{
    margin-left: 13px;
}
.jelly{
    margin-left: auto;
    margin-right: 4px;
}
.tapps{
    display: flex;
    margin-left: -1px;
    height: 50px;
}
.tapp{
    width: 52px;
    margin: 0 5.250px;
    height: 50px;
    display: flex;
    align-items: center;
    justify-content: center;
    border-bottom: 3px solid transparent;
    padding-top: 3px;
}
.tapp.u{
    border-bottom-color: #0f74c4;
}
.tapp.active{
    background: #e2eef5;
    width: 57px;
    margin-left: 2px;
}
.mail{
    margin-left: 6px;
}
.badge{
    font-size: 11px;
    font-weight: 700;
    text-anchor: middle;
    fill: #111;
    font-family: "Noto Sans", sans-serif;
}
.wd{
    font-size: 13px;
    font-weight: 700;
    fill: #fff;
    text-anchor: middle;
    font-family: "Noto Sans", sans-serif;
}
.tray{
    margin-left: auto;
    display: flex;
    align-items: center;
    height: 50px;
    font-size: 17px;
    padding-right: 30px;
}
.temp{
    margin-left: 12px;
}
.sky{
    margin-left: 10px;
}
.t-chev{
    margin-left: 30px;
    margin-right: 7px;
}
.tcell{
    width: 30px;
    display: flex;
    justify-content: center;
}
.tcell.wide{
    width: 38px;
}
.clock{
    width: 86px;
    display: flex;
    flex-direction: column;
    align-items: center;
    font-size: 14px;
    line-height: 23px;
}
.t-note{
    margin-left: 15px;
}
```
